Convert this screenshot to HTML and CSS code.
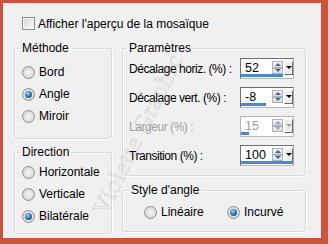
FILE: index.html
```html
<!DOCTYPE html>
<html lang="fr">
    <head>
        <meta charset="UTF-8" />
        <title>Mosaïque</title>
        <link rel="stylesheet" href="styles.css">
    </head>
    <body>
        <div class="frame">
            <div class="check-row">
                <span class="checkbox"></span>
                <span>Afficher l'aperçu de la mosaïque</span>
            </div>

            <div class="cols">
                <div class="col">
                    <fieldset class="group method">
                        <legend>Méthode</legend>
                        <div class="opt"><span class="radio"></span>Bord</div>
                        <div class="opt"><span class="radio on"></span>Angle</div>
                        <div class="opt"><span class="radio"></span>Miroir</div>
                    </fieldset>

                    <fieldset class="group direction">
                        <legend>Direction</legend>
                        <div class="opt"><span class="radio"></span>Horizontale</div>
                        <div class="opt"><span class="radio"></span>Verticale</div>
                        <div class="opt"><span class="radio on"></span>Bilatérale</div>
                    </fieldset>
                </div>

                <div class="col">
                    <fieldset class="group params">
                        <legend>Paramètres</legend>
                        <div class="param">
                            <span class="plabel">Décalage horiz. (%) :</span>
                            <div class="spin">
                                <span class="val">52</span>
                                <span class="arrows"><i class="up"></i><i class="down"></i></span>
                                <span class="drop"></span>
                                <span class="bar" style="width: 42px"></span>
                            </div>
                        </div>
                        <div class="param">
                            <span class="plabel">Décalage vert. (%) :</span>
                            <div class="spin">
                                <span class="val">-8</span>
                                <span class="arrows"><i class="up"></i><i class="down"></i></span>
                                <span class="drop"></span>
                                <span class="bar" style="width: 25px"></span>
                            </div>
                        </div>
                        <div class="param disabled">
                            <span class="plabel">Largeur (%) :</span>
                            <div class="spin">
                                <span class="val">15</span>
                                <span class="arrows"><i class="up"></i><i class="down"></i></span>
                                <span class="drop"></span>
                                <span class="bar" style="width: 8px"></span>
                            </div>
                        </div>
                        <div class="param">
                            <span class="plabel">Transition (%) :</span>
                            <div class="spin">
                                <span class="val">100</span>
                                <span class="arrows"><i class="up"></i><i class="down"></i></span>
                                <span class="drop"></span>
                                <span class="bar" style="width: 52px"></span>
                            </div>
                        </div>
                    </fieldset>

                    <fieldset class="group style">
                        <legend>Style d'angle</legend>
                        <div class="opts">
                            <div class="opt wide"><span class="radio"></span>Linéaire</div>
                            <div class="opt"><span class="radio on"></span>Incurvé</div>
                        </div>
                    </fieldset>
                </div>
            </div>

            <div class="watermark">Violette Graphic</div>
        </div>
    </body>
</html>
```

FILE: styles.css
```css
html, body {
    margin: 0;
    padding: 0;
}

body {
    font-family: "Liberation Sans", Arial, sans-serif;
    font-size: 12px;
    color: #000;
}

.frame {
    position: relative;
    width: 328px;
    height: 244px;
    box-sizing: border-box;
    border-style: solid;
    border-color: #c9553b;
    border-width: 3px 7px 6px 3px;
    background: #f0f0f0;
    padding: 14px 0 0 11px;
    overflow: hidden;
}

.check-row {
    display: flex;
    align-items: center;
    height: 13px;
    margin-left: 8px;
    gap: 3px;
}

.checkbox {
    width: 13px;
    height: 13px;
    box-sizing: border-box;
    border: 1px solid #8f8f8f;
    background: linear-gradient(135deg, #d8d8d8, #f8f8f8);
    box-shadow: inset 0 0 0 1px #f4f4f4;
}

.cols {
    display: grid;
    grid-template-columns: 98px 184px;
    column-gap: 10px;
    margin-top: 10px;
}

.col {
    display: flex;
    flex-direction: column;
}

.group {
    margin: 0;
    border: 1px solid #d9d9d9;
    border-radius: 3px;
    box-shadow: inset 1px 1px 0 #fff, 1px 1px 0 #fff;
    padding: 0 0 0 7px;
}

.group legend {
    padding: 0 2px;
    margin-left: -2px;
    line-height: 16px;
}

.opt {
    display: flex;
    align-items: center;
    height: 22px;
}

.radio {
    width: 13px;
    height: 13px;
    box-sizing: border-box;
    border-radius: 50%;
    border: 1px solid #8e8f8f;
    background: radial-gradient(circle at 50% 50%, #f6f6f6 0, #e0e0e0 55%, #c8c8c8 100%);
    margin-right: 4px;
    display: flex;
    justify-content: center;
    align-items: center;
}

.radio.on::after {
    content: "";
    width: 7px;
    height: 7px;
    border-radius: 50%;
    background: radial-gradient(circle at 40% 35%, #a8dcf8 0, #2d80b8 45%, #0b3454 100%);
}

.method {
    padding-top: 5px;
    padding-bottom: 11px;
}

.direction {
    margin-top: 5px;
    padding-top: 1px;
    padding-bottom: 6px;
}

.params {
    padding: 2px 11px 9px 6px;
    display: flex;
    flex-direction: column;
    gap: 8px;
}

.param {
    display: flex;
    justify-content: space-between;
    align-items: center;
    height: 21px;
}

.plabel {
    white-space: nowrap;
    letter-spacing: -0.45px;
}

.spin {
    position: relative;
    flex: none;
    width: 54px;
    height: 21px;
    box-sizing: border-box;
    background: #fff;
    border: 1px solid #707070;
    border-right-color: #a8a8a8;
    border-bottom-color: #b8b8b8;
    display: flex;
    align-items: center;
    padding: 0 0 2px 4px;
}

.val {
    flex: 1;
    line-height: 14px;
    font-size: 12.5px;
}

.arrows {
    display: flex;
    flex-direction: column;
    width: 11px;
    height: 13px;
    margin-right: 1px;
}

.arrows i {
    flex: 1;
    box-sizing: border-box;
    border: 1px solid #a9b3bd;
    background: linear-gradient(#f4f6f8, #d9dee3);
    display: flex;
    justify-content: center;
    align-items: center;
}

.arrows i::after {
    content: "";
    border-left: 3px solid transparent;
    border-right: 3px solid transparent;
}

.arrows .up::after {
    border-bottom: 3px solid #55607c;
}

.arrows .down::after {
    border-top: 3px solid #55607c;
}

.drop {
    width: 9px;
    height: 14px;
    box-sizing: border-box;
    background: #ececec;
    border: 1px solid #fff;
    border-right-color: #6a6a6a;
    border-bottom-color: #6a6a6a;
    display: flex;
    justify-content: center;
    align-items: center;
}

.drop::after {
    content: "";
    border-left: 3px solid transparent;
    border-right: 3px solid transparent;
    border-top: 3px solid #000;
}

.bar {
    position: absolute;
    left: 0;
    bottom: 1px;
    height: 3px;
    background: #4a88cc;
}

.disabled {
    color: #a0a0a0;
}

.disabled .spin {
    border-color: #b8b8b8;
}

.disabled .arrows i::after {
    opacity: 0.5;
}

.disabled .drop::after {
    border-top-color: #a0a0a0;
}

.style {
    margin-top: 6px;
    padding: 4px 0 9px 6px;
}

.style legend {
    margin-left: 0;
}

.opts {
    display: flex;
    margin-left: 15px;
}

.opt.wide {
    width: 83px;
}

.style .opt {
    height: 20px;
}

.watermark {
    position: absolute;
    left: 40px;
    top: 118px;
    width: 190px;
    text-align: center;
    font-family: "Liberation Serif", serif;
    font-size: 24px;
    letter-spacing: 1px;
    color: transparent;
    -webkit-text-stroke: 0.6px rgba(150, 150, 150, 0.35);
    transform: rotate(-64deg);
    pointer-events: none;
    white-space: nowrap;
}
```
